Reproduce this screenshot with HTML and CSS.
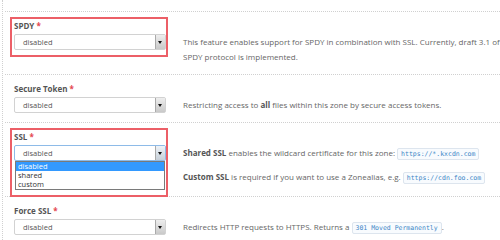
FILE: index.html
```html
<!DOCTYPE html>
<html lang="en">
<head>
  <meta charset="UTF-8" />
  <title>Zone settings</title>
  <link rel="stylesheet" href="styles.css">
</head>
<body>
  <div class="form">
    <div class="row">
      <div class="field">
        <div class="hl hl-spdy">
          <div class="label">SPDY <span class="req">*</span></div>
          <div class="select"><span class="value">disabled</span><span class="arrow"></span></div>
        </div>
      </div>
      <div class="help">
        <p>This feature enables support for SPDY in combination with SSL. Currently, draft 3.1 of SPDY protocol is implemented.</p>
      </div>
    </div>

    <div class="row">
      <div class="field">
        <div class="label">Secure Token <span class="req">*</span></div>
        <div class="select"><span class="value">disabled</span><span class="arrow"></span></div>
      </div>
      <div class="help">
        <p>Restricting access to <strong>all</strong> files within this zone by secure access tokens.</p>
      </div>
    </div>

    <div class="row">
      <div class="field">
        <div class="hl hl-ssl">
          <div class="label">SSL <span class="req">*</span></div>
          <div class="select focus">
            <span class="value">disabled</span><span class="arrow"></span>
            <ul class="options">
              <li class="active">disabled</li>
              <li>shared</li>
              <li>custom</li>
            </ul>
          </div>
        </div>
      </div>
      <div class="help">
        <p><strong>Shared SSL</strong> enables the wildcard certificate for this zone: <code>https://*.kxcdn.com</code></p>
        <p><strong>Custom SSL</strong> is required if you want to use a Zonealias, e.g. <code>https://cdn.foo.com</code></p>
      </div>
    </div>

    <div class="row">
      <div class="field">
        <div class="label">Force SSL <span class="req">*</span></div>
        <div class="select"><span class="value">disabled</span><span class="arrow"></span></div>
      </div>
      <div class="help">
        <p>Redirects HTTP requests to HTTPS. Returns a <code>301 Moved Permanently</code>.</p>
      </div>
    </div>
  </div>
</body>
</html>
```

FILE: styles.css
```css
body {
  margin: 0;
  background: #fff;
  font-family: 'Open Sans', sans-serif;
  color: #666;
}

.form {
  margin-left: 2px;
  padding: 11px 0 0 2px;
  border-left: 1px dotted #d0d0d0;
  min-height: 240px;
  box-sizing: border-box;
}

.row {
  display: grid;
  grid-template-columns: 152px 1fr;
  column-gap: 17px;
  padding: 8px 0 3px 9px;
  border-top: 1px dotted #d0d0d0;
}

.field {
  position: relative;
}

.label {
  font-size: 8px;
  font-weight: 700;
  line-height: 12px;
  color: #555;
  margin-bottom: 2px;
}

.req {
  color: #e4474f;
}

/* red annotation frames, drawn without moving the layout */
.hl {
  position: relative;
  border: 2px solid #ec5f67;
  margin: -3px -2px -7px -4px;
  padding: 1px 0 5px 2px;
}

.hl-ssl {
  margin-bottom: -36px;
  padding-bottom: 34px;
}

.select {
  position: relative;
  display: flex;
  height: 16px;
  box-sizing: border-box;
  border: 1px solid #d2d2d2;
  border-radius: 2px;
  background: #fff;
  font-size: 7.5px;
  color: #555;
}

.select.focus {
  border-color: #8ebbe8;
}

.value {
  flex: 1;
  padding-left: 8px;
  line-height: 14px;
}

.arrow {
  position: relative;
  width: 9px;
  border-left: 1px solid #aaa;
  background: linear-gradient(#eee, #c9c9c9);
}

.focus .arrow {
  background: linear-gradient(#eef3f8, #c6cfd8);
}

.arrow::after {
  content: '';
  position: absolute;
  left: 2px;
  top: 6px;
  border-left: 2.5px solid transparent;
  border-right: 2.5px solid transparent;
  border-top: 3px solid #111;
}

.options {
  position: absolute;
  top: 15px;
  left: 0;
  right: 0;
  margin: 0;
  padding: 0;
  list-style: none;
  background: #fff;
  border: 1px solid #7a7a7a;
  font-size: 7.5px;
  line-height: 9px;
  color: #333;
}

.options li {
  padding-left: 2px;
}

.options li.active {
  background: #3399ff;
  color: #fff;
}

.help {
  padding-top: 14px;
  font-size: 8px;
  line-height: 15px;
}

.help p {
  margin: 0 0 7px;
}

.help strong {
  color: #555;
}

code {
  font-family: 'DejaVu Sans Mono', monospace;
  font-size: 6.5px;
  color: #3b86c6;
  background: #f8fbfe;
  border: 1px solid #dde5ee;
  border-radius: 2px;
  padding: 1px 3px;
}
```
